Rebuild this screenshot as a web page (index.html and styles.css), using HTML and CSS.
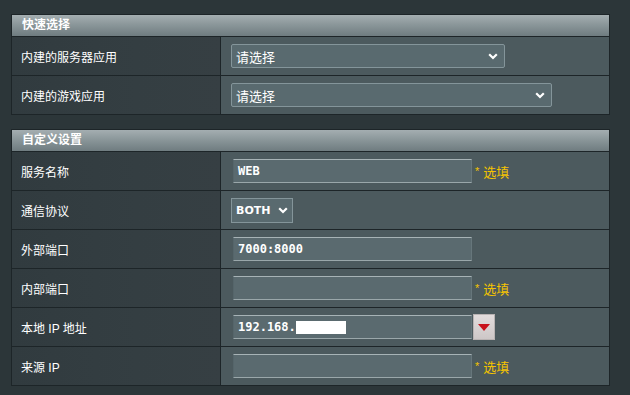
FILE: index.html
```html
<!DOCTYPE html>
<html lang="zh-CN">
<head>
<meta charset="utf-8">
<link rel="stylesheet" href="styles.css">
</head>
<body>
<div class="panel">
  <div class="head">快速选择</div>
  <div class="row">
    <div class="label">内建的服务器应用</div>
    <div class="value">
      <div class="dd w274"><span>请选择</span><svg class="chev" width="10" height="7" viewBox="0 0 10 7"><polyline points="1.2,1.2 5,5 8.8,1.2" fill="none" stroke="#fff" stroke-width="2.2"/></svg></div>
    </div>
  </div>
  <div class="row">
    <div class="label">内建的游戏应用</div>
    <div class="value">
      <div class="dd w321"><span>请选择</span><svg class="chev" width="10" height="7" viewBox="0 0 10 7"><polyline points="1.2,1.2 5,5 8.8,1.2" fill="none" stroke="#fff" stroke-width="2.2"/></svg></div>
    </div>
  </div>
</div>

<div class="panel second">
  <div class="head">自定义设置</div>
  <div class="row">
    <div class="label">服务名称</div>
    <div class="value">
      <div class="inp">WEB</div><span class="opt">*<b>选填</b></span>
    </div>
  </div>
  <div class="row">
    <div class="label">通信协议</div>
    <div class="value">
      <div class="dd small"><span class="lat">BOTH</span><svg class="chev" width="10" height="7" viewBox="0 0 10 7"><polyline points="1.2,1.2 5,5 8.8,1.2" fill="none" stroke="#fff" stroke-width="2.2"/></svg></div>
    </div>
  </div>
  <div class="row">
    <div class="label">外部端口</div>
    <div class="value">
      <div class="inp">7000:8000</div>
    </div>
  </div>
  <div class="row">
    <div class="label">内部端口</div>
    <div class="value">
      <div class="inp"></div><span class="opt">*<b>选填</b></span>
    </div>
  </div>
  <div class="row">
    <div class="label">本地 IP 地址</div>
    <div class="value">
      <div class="inp">192.168.<span class="mask"></span></div><div class="btn"><svg width="12" height="7" viewBox="0 0 12 7"><polygon points="0,0 12,0 6,7" fill="#c8111b"/></svg></div>
    </div>
  </div>
  <div class="row">
    <div class="label">来源 IP</div>
    <div class="value">
      <div class="inp"></div><span class="opt">*<b>选填</b></span>
    </div>
  </div>
</div>
</body>
</html>
```

FILE: styles.css
```css
html, body {
  margin: 0;
  padding: 0;
}
body {
  background: #2c3639;
  padding: 14px 0 0 11px;
  font-family: "Liberation Sans", "Noto Sans CJK SC", sans-serif;
  color: #fff;
}
.panel {
  width: 597px;
  border: 1px solid #1d2528;
  background: #1d2528;
  display: flex;
  flex-direction: column;
  gap: 1px;
}
.second {
  margin-top: 14px;
}
.head {
  height: 21px;
  line-height: 21px;
  padding-left: 10px;
  font-size: 12px;
  font-weight: bold;
  background: linear-gradient(to bottom, #a4aeb1 0%, #8b979a 45%, #6f7c80 100%);
  color: #fff;
}
.row {
  display: grid;
  grid-template-columns: 208px 1fr;
  gap: 1px;
  height: 38px;
}
.label {
  background: linear-gradient(to right, #313b3f 0%, #343e42 60%, #363f43 100%);
  font-size: 12px;
  padding-left: 9px;
  display: flex;
  align-items: center;
}
.value {
  background: #4c5a5e;
  display: flex;
  align-items: center;
  padding-left: 10px;
}
.dd {
  height: 22px;
  border: 1px solid #84959a;
  border-radius: 2px;
  background: #596a6f;
  display: flex;
  align-items: center;
  justify-content: space-between;
  padding: 0 6px 0 4px;
  font-size: 13px;
  box-sizing: content-box;
}
.w274 { width: 262px; }
.w321 { width: 309px; }
.dd.small {
  width: 52px;
  height: 23px;
  border-radius: 0;
  padding: 0 4px 0 4px;
}
.lat {
  font-family: "DejaVu Sans", sans-serif;
  font-size: 11px;
  font-weight: bold;
}
.chev {
  display: block;
}
.inp {
  margin-left: 2px;
  width: 233px;
  height: 22px;
  background: #5a6a6f;
  border-top: 1px solid #a7b3b6;
  border-bottom: 1px solid #9aa7aa;
  border-left: 1px solid #55656a;
  border-right: 1px solid #66767b;
  padding-left: 4px;
  display: flex;
  align-items: center;
  font-family: "DejaVu Sans Mono", monospace;
  font-size: 12px;
  font-weight: bold;
  color: #fff;
}
.mask {
  display: inline-block;
  width: 50px;
  height: 13px;
  background: #fff;
}
.opt {
  margin-left: 3px;
  color: #f5c400;
  font-size: 11px;
  display: flex;
  align-items: center;
}
.opt b {
  font-weight: normal;
  font-size: 13px;
  margin-left: 4px;
}
.btn {
  width: 22px;
  height: 26px;
  margin-left: 1px;
  background: linear-gradient(to bottom, #e2dcdc, #cdc7c7);
  border: 1px solid #b9b3b3;
  box-sizing: border-box;
  display: flex;
  align-items: center;
  justify-content: center;
}
```
